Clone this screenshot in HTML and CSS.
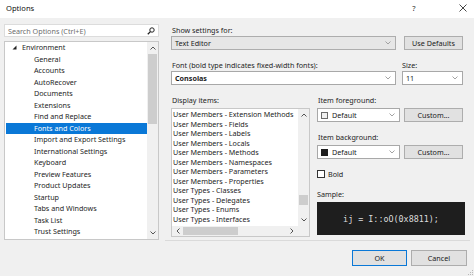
FILE: index.html
```html
<!DOCTYPE html>
<html>
<head>
<meta charset="utf-8">
<link rel="stylesheet" href="styles.css">
</head>
<body>
<div class="window">
  <div class="titlebar">
    <span class="title">Options</span>
    <span class="tb-help">?</span>
    <span class="tb-close">
      <svg width="8" height="8" viewBox="0 0 8 8"><path d="M0.5 0.5 L7.5 7.5 M7.5 0.5 L0.5 7.5" stroke="#333" stroke-width="0.9" fill="none"/></svg>
    </span>
  </div>
  <div class="main">
    <div class="left">
      <div class="search">
        <span class="search-text">Search Options (Ctrl+E)</span>
        <svg class="search-icon" width="8" height="8" viewBox="0 0 8 8"><circle cx="5" cy="3" r="2.2" stroke="#222" stroke-width="1" fill="none"/><path d="M3.4 4.6 L0.8 7.2" stroke="#222" stroke-width="1.3"/></svg>
      </div>
      <div class="tree">
        <div class="tree-items">
          <div class="node root"><svg class="expander" width="5" height="5" viewBox="0 0 5 5"><path d="M4.5 0.5 L4.5 4.5 L0.5 4.5 Z" fill="#222"/></svg>Environment</div>
          <div class="node">General</div>
          <div class="node">Accounts</div>
          <div class="node">AutoRecover</div>
          <div class="node">Documents</div>
          <div class="node">Extensions</div>
          <div class="node">Find and Replace</div>
          <div class="node selected">Fonts and Colors</div>
          <div class="node">Import and Export Settings</div>
          <div class="node">International Settings</div>
          <div class="node">Keyboard</div>
          <div class="node">Preview Features</div>
          <div class="node">Product Updates</div>
          <div class="node">Startup</div>
          <div class="node">Tabs and Windows</div>
          <div class="node">Task List</div>
          <div class="node">Trust Settings</div>
          <div class="node">Web Browser</div>
        </div>
        <div class="vscroll tree-scroll">
          <svg class="arrow" width="6" height="4" viewBox="0 0 6 4"><path d="M0.5 3.5 L3 1 L5.5 3.5" stroke="#555" stroke-width="1" fill="none"/></svg>
          <div class="track"><div class="thumb tree-thumb"></div></div>
          <svg class="arrow" width="6" height="4" viewBox="0 0 6 4"><path d="M0.5 0.5 L3 3 L5.5 0.5" stroke="#555" stroke-width="1" fill="none"/></svg>
        </div>
      </div>
    </div>
    <div class="panel">
    <div class="right">
      <div class="label first">Show settings for:</div>
      <div class="row">
        <div class="combo gray wide"><span>Text Editor</span><svg class="chev" width="6" height="4" viewBox="0 0 6 4"><path d="M0.5 0.5 L3 3 L5.5 0.5" stroke="#999" stroke-width="0.9" fill="none"/></svg></div>
        <div class="button defaults">Use Defaults</div>
      </div>
      <div class="row labels">
        <div class="label font-label">Font (bold type indicates fixed-width fonts):</div>
        <div class="label size-label">Size:</div>
      </div>
      <div class="row">
        <div class="combo white wide"><span class="bold">Consolas</span><svg class="chev" width="6" height="4" viewBox="0 0 6 4"><path d="M0.5 0.5 L3 3 L5.5 0.5" stroke="#999" stroke-width="0.9" fill="none"/></svg></div>
        <div class="combo white size"><span>11</span><svg class="chev" width="6" height="4" viewBox="0 0 6 4"><path d="M0.5 0.5 L3 3 L5.5 0.5" stroke="#999" stroke-width="0.9" fill="none"/></svg></div>
      </div>
      <div class="lower">
        <div class="items-col">
          <div class="label sect">Display items:</div>
          <div class="listbox">
            <div class="list-main">
              <div class="list-items">
                <div class="item">User Members - Extension Methods</div>
                <div class="item">User Members - Fields</div>
                <div class="item">User Members - Labels</div>
                <div class="item">User Members - Locals</div>
                <div class="item">User Members - Methods</div>
                <div class="item">User Members - Namespaces</div>
                <div class="item">User Members - Parameters</div>
                <div class="item">User Members - Properties</div>
                <div class="item">User Types - Classes</div>
                <div class="item">User Types - Delegates</div>
                <div class="item">User Types - Enums</div>
                <div class="item">User Types - Interfaces</div>
              </div>
              <div class="vscroll list-scroll">
                <svg class="arrow" width="6" height="4" viewBox="0 0 6 4"><path d="M0.5 3.5 L3 1 L5.5 3.5" stroke="#555" stroke-width="1" fill="none"/></svg>
                <div class="track"><div class="thumb list-thumb"></div></div>
                <svg class="arrow" width="6" height="4" viewBox="0 0 6 4"><path d="M0.5 0.5 L3 3 L5.5 0.5" stroke="#555" stroke-width="1" fill="none"/></svg>
              </div>
            </div>
            <div class="hscroll">
              <svg class="harrow" width="4" height="6" viewBox="0 0 4 6"><path d="M3.5 0.5 L1 3 L3.5 5.5" stroke="#555" stroke-width="1" fill="none"/></svg>
              <div class="htrack"><div class="hthumb"></div></div>
              <svg class="harrow" width="4" height="6" viewBox="0 0 4 6"><path d="M0.5 0.5 L3 3 L0.5 5.5" stroke="#555" stroke-width="1" fill="none"/></svg>
              <div class="corner"></div>
            </div>
          </div>
        </div>
        <div class="props-col">
          <div class="label sect">Item foreground:</div>
          <div class="row">
            <div class="combo white color"><span class="swatch light"></span><span>Default</span><svg class="chev" width="6" height="4" viewBox="0 0 6 4"><path d="M0.5 0.5 L3 3 L5.5 0.5" stroke="#999" stroke-width="0.9" fill="none"/></svg></div>
            <div class="button custom">Custom...</div>
          </div>
          <div class="label sect">Item background:</div>
          <div class="row">
            <div class="combo white color"><span class="swatch dark"></span><span>Default</span><svg class="chev" width="6" height="4" viewBox="0 0 6 4"><path d="M0.5 0.5 L3 3 L5.5 0.5" stroke="#999" stroke-width="0.9" fill="none"/></svg></div>
            <div class="button custom">Custom...</div>
          </div>
          <div class="check-row"><span class="checkbox"></span><span>Bold</span></div>
          <div class="label sample-label">Sample:</div>
          <div class="sample">ij = I::oO(0x8811);</div>
        </div>
      </div>
    </div>
    </div>
  </div>
  <div class="footer">
    <div class="button ok">OK</div>
    <div class="button cancel">Cancel</div>
    <svg class="grip" width="8" height="8" viewBox="0 0 8 8"><g fill="#b8b8b8"><rect x="6" y="2" width="1" height="1"/><rect x="4" y="4" width="1" height="1"/><rect x="6" y="4" width="1" height="1"/><rect x="2" y="6" width="1" height="1"/><rect x="4" y="6" width="1" height="1"/><rect x="6" y="6" width="1" height="1"/></g></svg>
  </div>
</div>
</body>
</html>
```
FILE: styles.css
```css
* { box-sizing: border-box; }
html, body { margin: 0; padding: 0; }
body {
  width: 474px;
  height: 276px;
  overflow: hidden;
  background: #f0f0f0;
  font-family: "Noto Sans", "Open Sans", sans-serif;
  font-size: 7.2px;
  color: #1a1a1a;
}
.window { width: 474px; height: 276px; display: flex; flex-direction: column; }
.titlebar {
  height: 18px;
  background: #ffffff;
  display: flex;
  align-items: center;
  padding: 0 0 2px 6px;
}
.title { flex: 1; font-size: 7.6px; color: #111; }
.tb-help { width: 20px; text-align: center; font-size: 7.6px; color: #333; margin-right: 28px; }
.tb-close { width: 22px; display: flex; justify-content: center; }

.main { display: flex; padding: 6px 0 0 4px; height: 224px; }
.left { width: 155px; display: flex; flex-direction: column; }
.search {
  height: 13px;
  background: #fff;
  border: 1px solid #dcdcdc;
  display: flex;
  align-items: center;
  padding: 0 3px 0 3px;
}
.search-text { flex: 1; color: #6d6d6d; }
.search-icon { display: block; }
.tree {
  margin-top: 4px;
  height: 199px;
  background: #fff;
  border: 1px solid #c8c8c8;
  display: flex;
  overflow: hidden;
}
.tree-items { flex: 1; padding: 0 0 0 1px; overflow: hidden; }
.node { height: 11.5px; line-height: 11.5px; padding-left: 28px; white-space: nowrap; color: #1e1e1e; }
.node.root { padding-left: 6px; display: flex; align-items: center; }
.expander { margin-right: 5px; }
.node.selected { background: #0a78d7; color: #fff; }
.vscroll { width: 11px; display: flex; flex-direction: column; align-items: center; background: #f0f0f0; }
.vscroll .arrow { display: block; margin: 4px 0 4px; }
.track { flex: 1; width: 100%; display: flex; flex-direction: column; align-items: center; }
.thumb { width: 9px; background: #cdcdcd; }
.tree-thumb { margin-top: 0px; height: 70px; }

.panel {
  width: 305px;
  height: 217px;
  margin-left: 6px;
  padding: 0 3px 0 6px;
  border-bottom: 1px solid #dadada;
}
.right { width: 296px; display: flex; flex-direction: column; }
.label { height: 12px; line-height: 12px; white-space: nowrap; color: #1e1e1e; }
.label.first { height: 12px; padding-left: 1px; }
.row { display: flex; align-items: stretch; }
.labels { height: 21px; padding-top: 9px; }
.labels .label { height: 12px; }
.font-label { width: 231px; padding-left: 1px; }
.combo {
  height: 14px;
  border: 1px solid #adadad;
  display: flex;
  align-items: center;
  padding: 0 4px 0 3px;
}
.combo span { flex: 1; white-space: nowrap; }
.combo .chev { display: block; }
.combo.gray { background: #e6e6e6; }
.combo.white { background: #fff; border-color: #a8a8a8; }
.wide { width: 225px; }
.size { width: 61px; margin-left: 6px; }
.bold { font-weight: 700; }
.button {
  border: 1px solid #adadad;
  background: #e1e1e1;
  display: flex;
  align-items: center;
  justify-content: center;
  white-space: nowrap;
}
.defaults { width: 59px; margin-left: 8px; height: 14px; }

.lower { display: flex; }
.label.sect { height: 23px; padding-top: 9px; line-height: 12px; padding-left: 1px; }
.items-col { width: 139px; display: flex; flex-direction: column; }
.listbox {
  height: 129px;
  background: #fff;
  border: 1px solid #c8c8c8;
  display: flex;
  flex-direction: column;
}
.list-main { flex: 1; display: flex; overflow: hidden; }
.list-items { flex: 1; padding-top: 1px; padding-left: 1px; overflow: hidden; }
.item { height: 9.5px; line-height: 9.5px; white-space: nowrap; color: #1e1e1e; }
.list-scroll { width: 11px; }
.list-scroll .arrow { margin: 4px 0; }
.list-thumb { margin-top: 74px; height: 10px; }
.hscroll { height: 10px; display: flex; align-items: center; background: #f0f0f0; }
.harrow { display: block; margin: 0 4px; }
.htrack { flex: 1; height: 100%; display: flex; align-items: center; }
.hthumb { width: 55px; height: 8px; background: #cdcdcd; margin-left: -1px; }
.corner { width: 11px; height: 100%; background: #f0f0f0; }

.props-col { width: 148px; margin-left: 7px; display: flex; flex-direction: column; }
.color { width: 83px; height: 14px; padding-left: 3px; }
.swatch { flex: 0 0 7px !important; width: 7px; height: 7px; margin-right: 4px; border: 1px solid #555; }
.swatch.light { background: #f0f0f0; border-color: #6b6b6b; }
.swatch.dark { background: #1e1e1e; border-color: #1e1e1e; }
.custom { width: 59px; margin-left: 4px; height: 14px; }
.check-row { height: 19px; padding-top: 10px; display: flex; align-items: center; }
.checkbox { width: 8px; height: 8px; border: 1px solid #333; background: #fff; margin-right: 3px; }
.label.sample-label { height: 24px; padding-top: 10px; padding-bottom: 2px; line-height: 12px; }
.sample {
  height: 33px;
  background: #1e1e1e;
  color: #dcdcdc;
  font-family: "DejaVu Sans Mono", "Liberation Mono", monospace;
  font-size: 8.4px;
  display: flex;
  align-items: center;
  justify-content: center;
}

.footer {
  flex: 1;
  display: flex;
  justify-content: flex-end;
  align-items: flex-start;
  padding: 8px 7px 0 0;
  position: relative;
}
.ok { width: 55px; height: 16px; border: 1px solid #0a78d7; background: #e1e1e1; }
.cancel { width: 56px; height: 16px; margin-left: 4px; }
.grip { position: absolute; right: 0; bottom: 0; }
```
